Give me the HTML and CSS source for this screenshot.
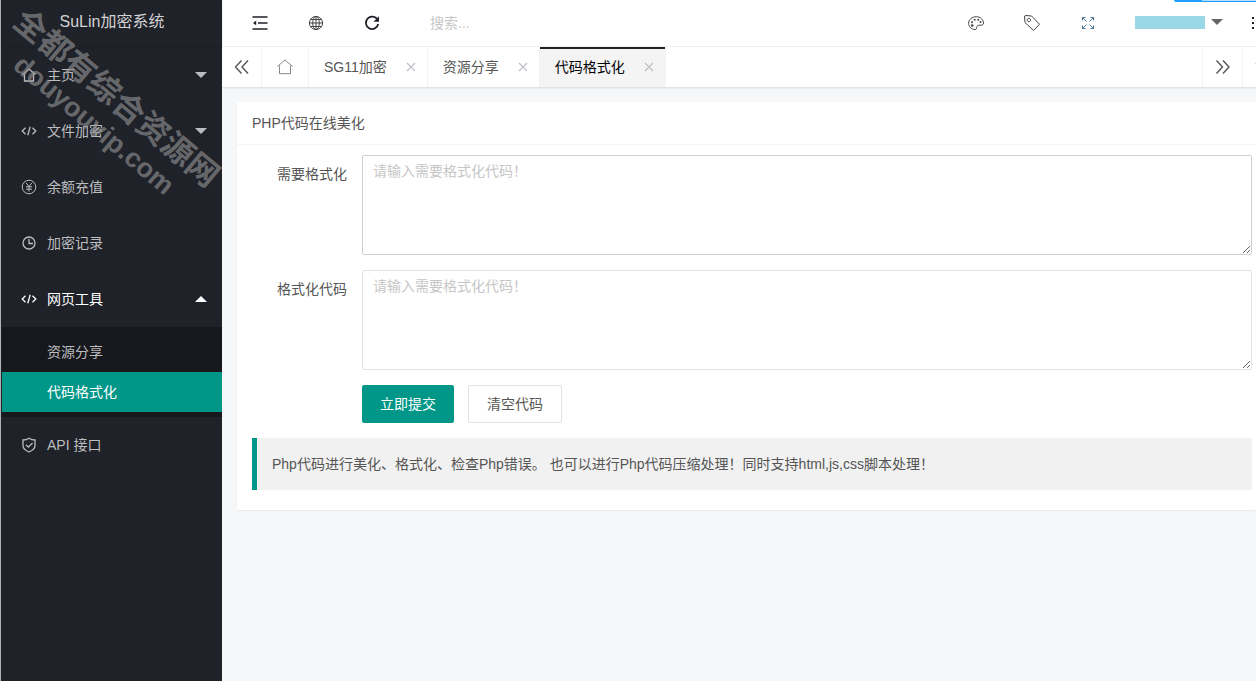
FILE: index.html
```html
<!DOCTYPE html>
<html lang="zh-CN">
<head>
<meta charset="utf-8">
<title>SuLin加密系统</title>
<link rel="stylesheet" href="styles.css">
</head>
<body>
<div class="app">
  <aside class="side">
    <h1 class="logo">SuLin加密系统</h1>
    <nav class="menu">
      <a class="menu-item" href="#">
        <svg class="ico" viewBox="0 0 16 16"><path d="M1.500 7.500 8 2l6.500 5.500M3.500 6.500V14h9V6.500"/></svg>
        <span>主页</span><i class="caret"></i>
      </a>
      <a class="menu-item" href="#">
        <svg class="ico" viewBox="0 0 16 16"><path d="M4.500 4.800 1.200 8l3.300 3.200M11.500 4.800 14.800 8l-3.300 3.200M9.200 3.800 6.800 12.200"/></svg>
        <span>文件加密</span><i class="caret"></i>
      </a>
      <a class="menu-item" href="#">
        <svg class="ico thin" viewBox="0 0 16 16"><circle cx="8" cy="8" r="6.800"/><path d="M5 3.800 8 7.500l3-3.700M8 7.500v5M5 7.800h6M5 10.200h6"/></svg>
        <span>余额充值</span>
      </a>
      <a class="menu-item" href="#">
        <svg class="ico" viewBox="0 0 16 16"><circle cx="8" cy="8" r="6"/><path d="M8 4v4.500h4"/></svg>
        <span>加密记录</span>
      </a>
      <a class="menu-item open" href="#">
        <svg class="ico" viewBox="0 0 16 16"><path d="M4.500 4.800 1.200 8l3.300 3.200M11.500 4.800 14.800 8l-3.300 3.200M9.200 3.800 6.800 12.200"/></svg>
        <span>网页工具</span><i class="caret up"></i>
      </a>
      <div class="submenu">
        <a class="sub-item" href="#">资源分享</a>
        <a class="sub-item current" href="#">代码格式化</a>
      </div>
      <a class="menu-item" href="#">
        <svg class="ico" viewBox="0 0 16 16"><path d="M8 1.200c2 1.300 4 1.800 6 1.800v5.500c0 3-2.500 5-6 6.500-3.500-1.500-6-3.500-6-6.500V3c2 0 4-.5 6-1.800zM5 7.800l2.300 2.300L11.500 6"/></svg>
        <span>API 接口</span>
      </a>
    </nav>
    <div class="watermark"><div class="wm-cn">全都有综合资源网</div><div class="wm-en">douyouvip.com</div></div>
  </aside>

  <div class="main">
    <header class="header">
      <button class="hbtn" aria-label="折叠菜单"><svg class="ico dark" viewBox="0 0 16 16"><path d="M.5 2h15M6 8h9.500M.5 14h15" stroke-width="1.600"/><path d="M1 8l3.200-2.300v4.600z" fill="currentColor" stroke="none"/></svg></button>
      <button class="hbtn" aria-label="网站"><svg class="ico" viewBox="0 0 16 16"><circle cx="8" cy="8" r="6.600"/><ellipse cx="8" cy="8" rx="3.300" ry="6.600"/><path d="M8 1.400v13.200M1.400 8h13.200M2.500 4.500h11M2.500 11.500h11"/></svg></button>
      <button class="hbtn" aria-label="刷新"><svg class="ico dark" viewBox="0 0 16 16"><path d="M13.500 4.800A6.200 6.200 0 1 0 14.200 9" stroke-width="1.800"/><path d="M15 1.200v5.500H9.500z" fill="currentColor" stroke="none"/></svg></button>
      <input class="search" type="text" placeholder="搜索..." aria-label="搜索">
      <button class="hbtn" aria-label="主题"><svg class="ico" viewBox="0 0 16 16"><path d="M8.300 1.700C4 1.700.6 4.600.6 8.300c0 3.500 3 6.200 6.300 6.200 2.200 0 1.500-1.700 2-3 .7-1.800 2.500-1.200 4.300-1.300 1.500-.1 2.300-.7 2.300-2.200-.1-3.500-3.200-6.300-7.200-6.300z"/><g fill="currentColor" stroke="none"><circle cx="4.200" cy="10.500" r="1.300"/><circle cx="4" cy="7.200" r="1"/><circle cx="6.700" cy="4.800" r="1"/><circle cx="10.200" cy="4.800" r="1"/><circle cx="12.500" cy="7" r="1"/></g></svg></button>
      <button class="hbtn" aria-label="便签"><svg class="ico" viewBox="0 0 16 16"><path d="M.5 2Q.5.500 2 .5L7.500 1l8 8.200-6 6.300L1 7.500zM4.800 3.300a1.700 1.700 0 1 0 .1 0z"/></svg></button>
      <button class="hbtn" aria-label="全屏"><svg class="ico blue" viewBox="0 0 16 16"><path d="M2.500 5.500v-3h3M2.500 2.500l4 4M10.500 2.500h3v3M13.500 2.500l-4 4M2.500 10.500v3h3M2.500 13.500l4-4M10.500 13.500h3v-3M13.500 13.500l-4-4"/></svg></button>
      <button class="user" aria-label="用户"><span class="user-name"></span><i class="caret gray"></i></button>
      <button class="more" aria-label="更多"><i></i><i></i><i></i></button>
    </header>

    <div class="tabs">
      <button class="tab-ctl" aria-label="向左"><svg class="ico" viewBox="0 0 16 16"><path d="M7.500 1.500 1.500 8l6 6.500M14 1.500 8 8l6 6.500" stroke-width="1.400"/></svg></button>
      <a class="tab-home" href="#" aria-label="首页"><svg class="ico" viewBox="0 0 16 16"><path d="M.3 7.500 8 1l7.700 6.500M2.500 6.500v8.200h11V6.500"/></svg></a>
      <div class="tab"><a href="#">SG11加密</a><button class="close" aria-label="关闭"><svg viewBox="0 0 10 10"><path d="M1 1l8 8M9 1 1 9"/></svg></button></div>
      <div class="tab"><a href="#">资源分享</a><button class="close" aria-label="关闭"><svg viewBox="0 0 10 10"><path d="M1 1l8 8M9 1 1 9"/></svg></button></div>
      <div class="tab active"><a href="#">代码格式化</a><button class="close" aria-label="关闭"><svg viewBox="0 0 10 10"><path d="M1 1l8 8M9 1 1 9"/></svg></button></div>
      <button class="tab-ctl next" aria-label="向右"><svg class="ico" viewBox="0 0 16 16"><path d="M1.500 1.500l6 6.500-6 6.500M8 1.500 14 8l-6 6.500" stroke-width="1.400"/></svg></button>
      <button class="tab-ctl down" aria-label="更多标签"><svg class="ico" viewBox="0 0 16 16"><path d="M1 4.500 8 11.500l7-7"/></svg></button>
    </div>

    <main class="content">
      <section class="card">
        <h2 class="card-head">PHP代码在线美化</h2>
        <form class="card-body">
          <div class="row">
            <label for="src">需要格式化</label>
            <textarea class="hover" id="src" placeholder="请输入需要格式化代码！"></textarea>
          </div>
          <div class="row">
            <label for="out">格式化代码</label>
            <textarea id="out" placeholder="请输入需要格式化代码！"></textarea>
          </div>
          <div class="actions">
            <button class="btn primary" type="button">立即提交</button>
            <button class="btn" type="reset">清空代码</button>
          </div>
          <blockquote class="note">Php代码进行美化、格式化、检查Php错误。 也可以进行Php代码压缩处理！同时支持html,js,css脚本处理！</blockquote>
        </form>
      </section>
    </main>
  </div>
  <div class="progress"><i></i></div>
</div>
</body>
</html>
```
FILE: styles.css
```css
* { box-sizing: border-box; }
body {
  margin: 0;
  font: 14px/20px "Liberation Sans", "Noto Sans CJK SC", sans-serif;
  color: #555;
  background: #f5f7f9;
}
a { color: inherit; text-decoration: none; }
button {
  margin: 0; padding: 0; border: 0; background: none;
  font: inherit; color: inherit; cursor: pointer;
}
.app { position: relative; display: flex; min-height: 100vh; overflow: hidden; }
.ico {
  flex: none; width: 16px; height: 16px; display: block;
  fill: none; stroke: currentColor; stroke-width: 1;
}

/* sidebar */
.side {
  position: relative; flex: none; width: 222px; padding-left: 1px;
  background: #20222a; border-left: 1px solid #a9b3b8;
  color: #bcbdbf;
}
.logo {
  margin: 0; height: 47px; padding-top: 1px;
  font-size: 16px; font-weight: 400; line-height: 42px; text-align: center;
  color: #d2d3d4; box-shadow: 0 1px 2px rgba(0, 0, 0, .15);
}
.menu-item {
  display: flex; align-items: center; height: 56px;
  padding: 0 15px 0 19px; gap: 10px;
}
.menu-item .ico { stroke-width: 1.3; }
.menu-item .thin { stroke-width: 1; }
.menu-item.open { color: #fff; }
.caret {
  margin-left: auto; border: 6px solid transparent;
  border-top-color: currentColor; border-bottom: 0;
}
.caret.up { border-top: 0; border-bottom: 6px solid currentColor; }
.submenu { padding: 5px 0; background: #17181d; }
.sub-item { display: block; padding-left: 45px; line-height: 40px; }
.sub-item.current { background: #009688; color: #fff; }
.watermark {
  position: absolute; left: -24px; top: 77px; width: 256px;
  transform: rotate(40deg); text-align: center; white-space: nowrap;
  font-weight: 700; line-height: 35px; color: rgba(145, 145, 145, .65);
  pointer-events: none;
}
.wm-cn { font-size: 32px; }
.wm-en { font-size: 27px; }

/* top bar */
.main { flex: 1; min-width: 0; }
.header {
  display: flex; align-items: center; height: 47px; padding-left: 10px;
  background: #fff; border-bottom: 1px solid #f2f2f2; color: #444;
}
.hbtn { flex: none; padding: 15px 20px; }
.dark { color: #20222a; }
.blue { color: #4a7a99; }
.search {
  flex: 1; min-width: 0; height: 40px; padding: 0 30px; border: 0;
  outline: 0; font: inherit; background: none;
}
::placeholder { color: #c6c6c6; opacity: 1; }
.user { display: flex; flex: none; align-items: center; gap: 6px; padding: 0 0 2px 19px; }
.user-name { width: 70px; height: 13px; background: #9ad8e8; }
.gray { color: #666; }
.more {
  flex: none; display: flex; flex-direction: column; gap: 3px;
  width: 4px; margin-left: 29px; overflow: hidden;
}
.more i { width: 2px; height: 2px; background: #20222a; }
.progress {
  position: absolute; top: 0; right: 0; width: 82px; height: 2px;
  background: #b5defa; border-bottom: 1px solid #1e9fff;
  border-bottom-left-radius: 4px; overflow: hidden;
}
.progress i { display: block; width: 28px; height: 2px; background: #1e9fff; }

/* tabs */
.tabs {
  display: flex; height: 40px; background: #fff;
  box-shadow: 0 1px 2px rgba(0, 0, 0, .12);
}
.tab-ctl {
  flex: none; display: flex; align-items: center; justify-content: center;
  width: 40px; border-right: 1px solid #f4f4f4;
}
.tab-ctl.next { width: 41px; margin-left: auto; border-left: 1px solid #f4f4f4; }
.tab-ctl.down { width: 13px; padding-left: 12px; justify-content: flex-start; border: 0; overflow: hidden; }
.tab-home {
  flex: none; display: flex; align-items: center; padding: 0 15px;
  border-right: 1px solid #f4f4f4; color: #888;
}
.tab {
  flex: none; display: flex; align-items: center; gap: 19px;
  padding: 0 11px 0 15px; border-right: 1px solid #f4f4f4;
}
.tab.active { background: #f4f4f4; box-shadow: inset 0 2px #20222a; color: #000; }
.close { width: 10px; height: 10px; }
.close svg { display: block; width: 10px; height: 10px; fill: none; stroke: #c0c0c6; stroke-width: 1.2; }

/* card */
.content { padding: 15px 0 0 15px; }
.card { background: #fff; border-radius: 2px 0 0 2px; box-shadow: 0 1px 2px rgba(0, 0, 0, .06); }
.card-head {
  margin: 0; padding: 0 15px; border-bottom: 1px solid #f4f4f4;
  font-size: 14px; font-weight: 400; line-height: 42px;
}
.card-body {
  display: flex; flex-direction: column; gap: 15px;
  padding: 10px 4px 20px 15px;
}
.row { display: flex; }
.row label { flex: none; width: 110px; padding: 9px 15px; text-align: right; }
.row textarea {
  flex: 1; min-width: 0; height: 100px; padding: 5px 10px;
  border: 1px solid #e4e4e4; border-radius: 2px; outline: 0;
  font: inherit; resize: vertical;
}
.row textarea.hover { border-color: #d0d0d0; }
.actions { display: flex; gap: 14px; padding-left: 110px; }
.btn {
  height: 38px; padding: 0 18px; border: 1px solid #e2e2e2; border-radius: 2px;
  background: #fff; line-height: 36px;
}
.btn.primary { border: 0; background: #009688; color: #fff; }
.note {
  margin: 0; padding: 15px; border-left: 5px solid #009688;
  border-radius: 0 2px 2px 0; background: #f1f1f1; line-height: 22px;
}
```
